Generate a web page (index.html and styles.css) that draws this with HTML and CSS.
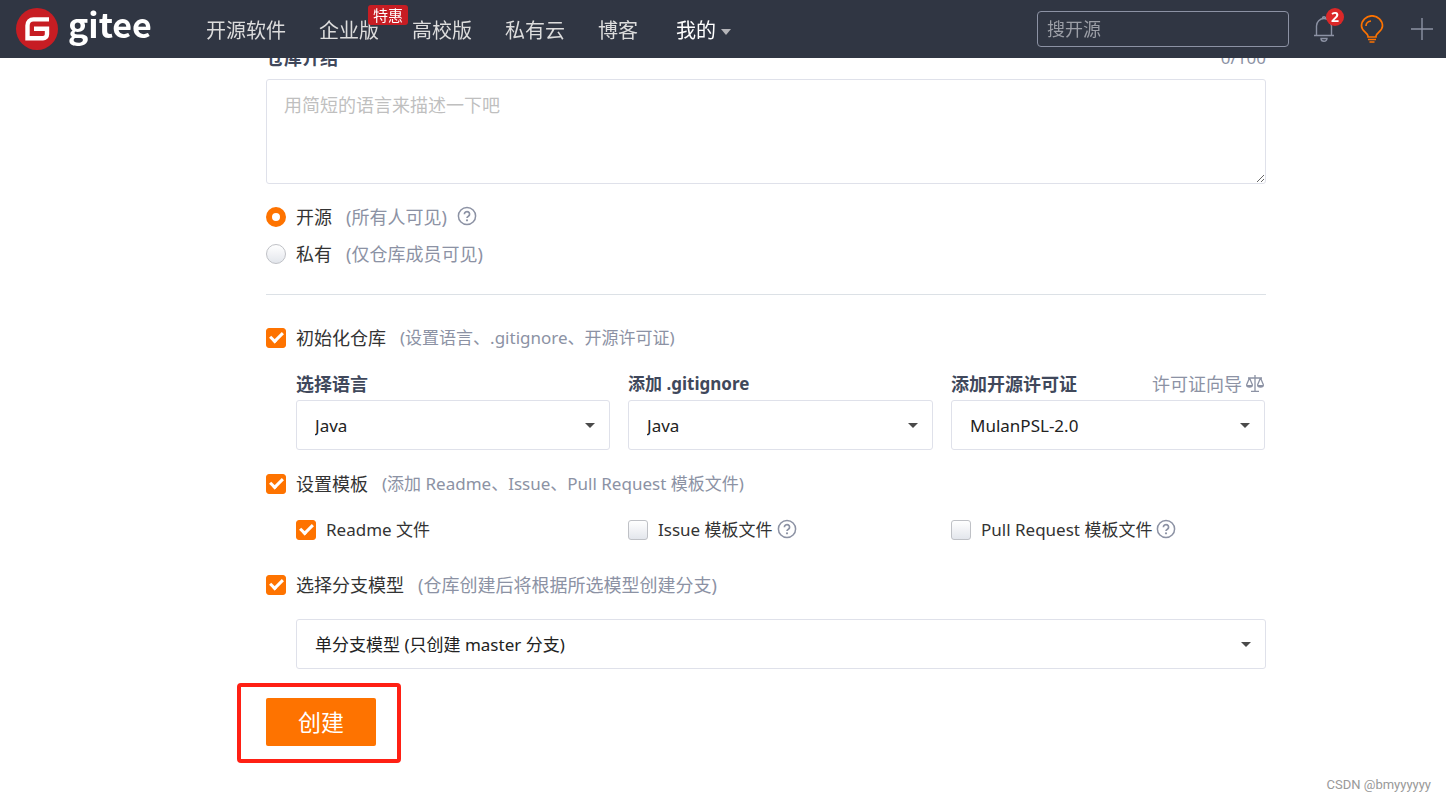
FILE: index.html
```html
<!DOCTYPE html>
<html lang="zh-CN">
<head>
<meta charset="utf-8">
<title>新建仓库 - Gitee</title>
<link rel="stylesheet" href="styles.css">
</head>
<body>
<svg class="sprite" aria-hidden="true">
  <symbol id="help" viewBox="0 0 20 20"><circle cx="10" cy="10" r="8.6" fill="none" stroke="currentColor" stroke-width="1.5"/><path d="M7.4 8.2a2.600 2.500 0 1 1 4 2c-1 .6-1.400.9-1.400 1.900" fill="none" stroke="currentColor" stroke-width="1.7"/><circle cx="10" cy="14.300" r="1.1" fill="currentColor"/></symbol>
</svg>
<header class="topbar">
  <a class="logo" href="#">
    <svg class="logo-mark" viewBox="0 0 42 42" aria-hidden="true"><circle cx="21" cy="21" r="21" fill="#c71d23"/><path d="M33 11.400H17.500a6 6 0 0 0-6 6V30.300H27a4 4 0 0 0 4-4V20.800H18" fill="none" stroke="#fff" stroke-width="4.400"/></svg>
    <span class="logo-name">gitee</span>
  </a>
  <nav class="nav">
    <a href="#">开源软件</a>
    <a href="#" class="promo">企业版<span class="tag">特惠</span></a>
    <a href="#">高校版</a>
    <a href="#">私有云</a>
    <a href="#">博客</a>
    <a href="#" class="mine">我的</a>
  </nav>
  <input class="search" type="search" placeholder="搜开源" aria-label="搜开源">
  <div class="tools">
    <button class="tool" type="button" aria-label="通知">
      <svg width="22" height="26" viewBox="0 0 22 26" fill="none" stroke="#8c92a4" stroke-width="1.400"><path d="M1 19.500H21M3.500 19.500V10a7.500 7.500 0 0 1 15 0v9.500M9.500 2a1.500 1.300 0 0 1 3 0M8 22.500h6a3 2.800 0 0 1-6 0z"/></svg>
      <span class="count">2</span>
    </button>
    <button class="tool" type="button" aria-label="建议">
      <svg width="24" height="28" viewBox="0 0 24 28" fill="none" stroke="#fe7300" stroke-width="1.700"><path d="M8 22V21C7.500 17.500 1.500 16 1.500 11a10.500 10.200 0 0 1 21 0c0 5-6 6.500-6.500 10V22zM6 11a5.500 5 0 0 1 5-5M8 24.500h8M9.500 27h5"/></svg>
    </button>
    <button class="tool add" type="button" aria-label="新建">
      <svg width="22" height="22" viewBox="0 0 22 22" stroke="#8c92a4" stroke-width="1.400"><path d="M11 0V22M0 11H22"/></svg>
    </button>
  </div>
</header>

<main class="page">
  <form class="form">
    <div class="line between">
      <label class="title" for="intro">仓库介绍</label><span class="hint mixed">0/100</span>
    </div>
    <textarea class="intro" id="intro" placeholder="用简短的语言来描述一下吧"></textarea>

    <div class="visibility">
      <div class="line"><input class="radio" type="radio" name="vis" id="open" checked><label for="open">开源</label><span class="note">(所有人可见)</span><svg class="help spaced"><use href="#help"/></svg></div>
      <div class="line"><input class="radio" type="radio" name="vis" id="private"><label for="private">私有</label><span class="note">(仅仓库成员可见)</span></div>
    </div>
    <hr class="rule">

    <div class="line"><input class="check" type="checkbox" id="init" checked><label for="init">初始化仓库</label><span class="note mixed">(设置语言、.gitignore、开源许可证)</span></div>
    <div class="columns selects">
      <div>
        <label class="line title" for="lang">选择语言</label>
        <div class="dropdown"><select id="lang"><option>Java</option></select></div>
      </div>
      <div>
        <label class="line title mixed" for="ignore">添加 .gitignore</label>
        <div class="dropdown"><select id="ignore"><option>Java</option></select></div>
      </div>
      <div>
        <div class="line between">
          <label class="title" for="license">添加开源许可证</label>
          <a class="guide" href="#">许可证向导<svg width="20" height="18" viewBox="0 0 20 18" fill="none" stroke="currentColor" stroke-width="1.300" aria-hidden="true"><path d="M10 0V16M6 16.300h8M3 3h14M4.500 3L1.500 10M4.500 3l3 7M15.500 3l-3 7M15.500 3l3 7"/><path d="M1 10h7a3.500 2.800 0 0 1-7 0zM12 10h7a3.500 2.800 0 0 1-7 0z" fill="currentColor" stroke="none"/></svg></a>
        </div>
        <div class="dropdown"><select id="license"><option>MulanPSL-2.0</option></select></div>
      </div>
    </div>

    <div class="line"><input class="check" type="checkbox" id="tpl" checked><label for="tpl">设置模板</label><span class="note mixed">(添加 Readme、Issue、Pull Request 模板文件)</span></div>
    <div class="columns templates mixed">
      <div class="line"><input class="check" type="checkbox" id="readme" checked><label for="readme">Readme 文件</label></div>
      <div class="line"><input class="check" type="checkbox" id="issue"><label for="issue">Issue 模板文件</label><svg class="help"><use href="#help"/></svg></div>
      <div class="line"><input class="check" type="checkbox" id="pr"><label for="pr">Pull Request 模板文件</label><svg class="help"><use href="#help"/></svg></div>
    </div>

    <div class="line"><input class="check" type="checkbox" id="branch" checked><label for="branch">选择分支模型</label><span class="note">(仓库创建后将根据所选模型创建分支)</span></div>
    <div class="dropdown model"><select aria-label="分支模型"><option>单分支模型 (只创建 master 分支)</option></select></div>

    <div class="submit"><button class="create" type="button">创建</button></div>
  </form>
</main>
<footer class="credit">CSDN @bmyyyyyy</footer>
</body>
</html>
```
FILE: styles.css
```css
*, ::before, ::after { box-sizing: border-box; }
body {
  margin: 0;
  min-height: 100vh;
  display: flex;
  flex-direction: column;
  background: #fff;
  color: #333;
  font: 18px/26px "Noto Sans", "Noto Sans CJK SC", sans-serif;
}
input, select, textarea, button { font: inherit; margin: 0; }
a { color: inherit; text-decoration: none; }
.sprite { position: absolute; width: 0; height: 0; }

.topbar {
  position: fixed;
  top: 0;
  left: 0;
  right: 0;
  z-index: 5;
  height: 58px;
  padding: 0 13px 0 16px;
  display: flex;
  align-items: center;
  background: #303643;
}
.logo { display: flex; align-items: center; gap: 10px; width: 190px; color: #fff; }
.logo-mark { width: 42px; height: 42px; }
.logo-name { font: bold 34px/40px "Noto Sans CJK SC", sans-serif; padding-bottom: 10px; }
.nav { display: flex; gap: 33px; font-size: 20px; line-height: 30px; color: #dcdcdc; white-space: nowrap; padding-top: 3px; }
.promo { position: relative; }
.tag {
  position: absolute;
  left: 49px;
  top: -11px;
  padding: 0 5px;
  font-size: 15px;
  line-height: 20px;
  color: #fff;
  background: #c71d23;
  border-radius: 3px;
}
.mine { display: flex; align-items: center; gap: 5px; margin-left: 5px; color: #fff; }
.mine::after { content: ""; margin-top: 3px; border: 5px solid transparent; border-top: 6px solid #b4b4b8; border-bottom: 0; }
.search {
  width: 252px;
  height: 36px;
  margin-left: auto;
  padding: 0 9px;
  color: #dcdcdc;
  background: transparent;
  border: 1px solid #8c92a4;
  border-radius: 4px;
  outline: 0;
}
.search::placeholder { color: #9b9ea6; opacity: 1; }
.tools { display: flex; align-items: center; gap: 25px; margin-left: 24px; }
.tool { display: flex; position: relative; padding: 0; border: 0; background: none; }
.add { margin-left: 2px; }
.count {
  position: absolute;
  left: 13px;
  top: -8px;
  width: 18px;
  height: 18px;
  border-radius: 9px;
  background: #db2828;
  color: #fff;
  font-size: 14px;
  line-height: 18px;
  font-weight: bold;
  text-align: center;
}

.page { padding: 45px 180px 0 266px; }
.line { display: flex; align-items: center; min-height: 26px; white-space: nowrap; }
.between { justify-content: space-between; }
.title { font-weight: bold; color: #40485b; }
.mixed { font-size: 17px; }
.hint, .note, .guide, .help { color: #8c92a4; }
.note { margin-left: 14px; }
.guide { display: flex; align-items: center; gap: 3px; }
.help { width: 20px; height: 20px; margin: 0 0 3px 4px; }
.spaced { margin-left: 10px; }

.intro {
  display: block;
  width: 100%;
  height: 105px;
  margin-top: 8px;
  padding: 12px 17px;
  border: 1px solid #dfe1ea;
  border-radius: 3px;
  outline: 0;
}
.intro::placeholder { color: #bfbfbf; opacity: 1; }
.visibility { display: grid; gap: 11px; margin-top: 20px; }
.rule { height: 1px; margin: 27px 0 30px; border: 0; background: #dce1e6; }

.radio, .check {
  appearance: none;
  flex: none;
  width: 20px;
  height: 20px;
  margin-right: 10px;
  border: 1px solid #bfc1c6;
  border-radius: 3px;
  background: linear-gradient(#fff, #e3e6ec);
}
.radio { border-radius: 10px; }
.radio:checked { border: 6px solid #fe7300; background: #fff; }
.check:checked { border-color: #fe7300; background: #fe7300; }
.check:checked::after {
  content: "";
  display: block;
  width: 13px;
  height: 8px;
  margin: 3px 0 0 3px;
  border: solid #fff;
  border-width: 0 0 3px 3px;
  transform: rotate(-45deg);
}

.columns { display: grid; grid-template-columns: 314fr 305fr 314fr; gap: 18px; margin-left: 30px; margin-right: 1px; }
.selects { margin-top: 20px; margin-bottom: 21px; }
.templates { margin-top: 20px; margin-bottom: 29px; }
.dropdown { position: relative; }
.columns .dropdown { margin-top: 3px; }
.dropdown select {
  appearance: none;
  display: block;
  width: 100%;
  height: 50px;
  padding: 1px 40px 0 18px;
  color: #222;
  font-size: 17px;
  background: #fff;
  border: 1px solid #dfe1ea;
  border-radius: 3px;
  outline: 0;
}
.dropdown::after {
  content: "";
  position: absolute;
  right: 15px;
  top: 23px;
  border: 5px solid transparent;
  border-top-color: #4a4a4a;
  border-bottom: 0;
  pointer-events: none;
}
.model { margin: 21px 0 29px 30px; }

.submit { position: relative; width: 110px; }
.submit::after {
  content: "";
  position: absolute;
  inset: -15px -25px -17px -29px;
  border: 4px solid #ff2014;
  border-radius: 4px;
  pointer-events: none;
}
.create {
  width: 100%;
  height: 48px;
  border: 0;
  border-radius: 2px;
  background: #fe7300;
  color: #fff;
  font-size: 23px;
}
.credit {
  margin-top: auto;
  padding: 0 15px 7px 0;
  text-align: right;
  color: #999;
  font: 13px/18px Roboto, sans-serif;
}
```
